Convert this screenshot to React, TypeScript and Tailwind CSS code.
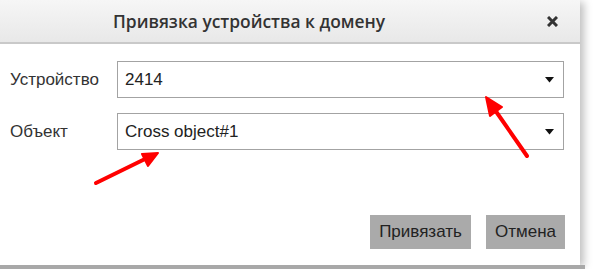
import React from "react";

function Caret() {
  return (
    <svg width="9" height="6" viewBox="0 0 9 6" className="shrink-0">
      <path d="M0 0 H9 L4.5 5.5 Z" fill="#111" />
    </svg>
  );
}

function Select({ value }: { value: string }) {
  return (
    <div className="flex items-center h-[37px] w-[447px] border border-[#a3a3a3] bg-white pl-[7px] pr-[9px]">
      <span className="flex-1 text-[17px] text-[#222]" style={{ fontFamily: '"Liberation Sans", Arial, sans-serif' }}>
        {value}
      </span>
      <Caret />
    </div>
  );
}

export default function App() {
  const sans = { fontFamily: '"Liberation Sans", Arial, sans-serif' };
  return (
    <div className="relative w-[600px] h-[269px] bg-white overflow-hidden">
      <div className="w-[580px] h-[265px] flex flex-col bg-white shadow-[4px_2px_8px_rgba(0,0,0,0.25)]">
        <div className="h-[44px] shrink-0 flex items-center bg-gradient-to-b from-[#f6f6f6] to-[#e8e8e8] border-b-2 border-[#c9c9c9] pl-[113px] pr-[22px]">
          <span
            className="text-[17.4px] font-semibold text-[#333]"
            style={{ fontFamily: '"Open Sans", "Noto Sans", sans-serif' }}
          >
            Привязка устройства к домену
          </span>
          <svg width="11" height="11" viewBox="0 0 11 11" className="ml-auto">
            <path d="M1 1 L10 10 M10 1 L1 10" stroke="#333" strokeWidth="3" strokeLinecap="butt" />
          </svg>
        </div>
        <div className="flex flex-col gap-[15px] pt-[17px] pl-[10px]">
          <div className="flex items-center">
            <span className="w-[107px] text-[17px] text-[#333]" style={sans}>Устройство</span>
            <Select value="2414" />
          </div>
          <div className="flex items-center">
            <span className="w-[107px] text-[17px] text-[#333]" style={sans}>Объект</span>
            <Select value="Cross object#1" />
          </div>
        </div>
        <div className="flex justify-end gap-[15px] pr-[15px] mt-[65px]">
          <button className="h-[34px] w-[101px] bg-[#aaaaaa] text-[17px] text-[#222]" style={sans}>Привязать</button>
          <button className="h-[34px] w-[79px] bg-[#aaaaaa] text-[17px] text-[#222]" style={sans}>Отмена</button>
        </div>
      </div>
      <div className="absolute left-0 bottom-0 w-[585px] h-[4px] bg-[#a8a8a8]" />
      <svg className="absolute left-0 top-0 pointer-events-none" width="600" height="269">
        <line x1="527" y1="156" x2="495" y2="110" stroke="#ff0000" strokeWidth="4" strokeLinecap="round" />
        <path d="M486 97 L502 107 L490 116 Z" fill="#ff0000" stroke="#ff0000" strokeWidth="2" strokeLinejoin="round" />
        <line x1="96" y1="183" x2="145" y2="159" stroke="#ff0000" strokeWidth="4" strokeLinecap="round" />
        <path d="M158 153 L148 166 L142 154 Z" fill="#ff0000" stroke="#ff0000" strokeWidth="2" strokeLinejoin="round" />
      </svg>
    </div>
  );
}
